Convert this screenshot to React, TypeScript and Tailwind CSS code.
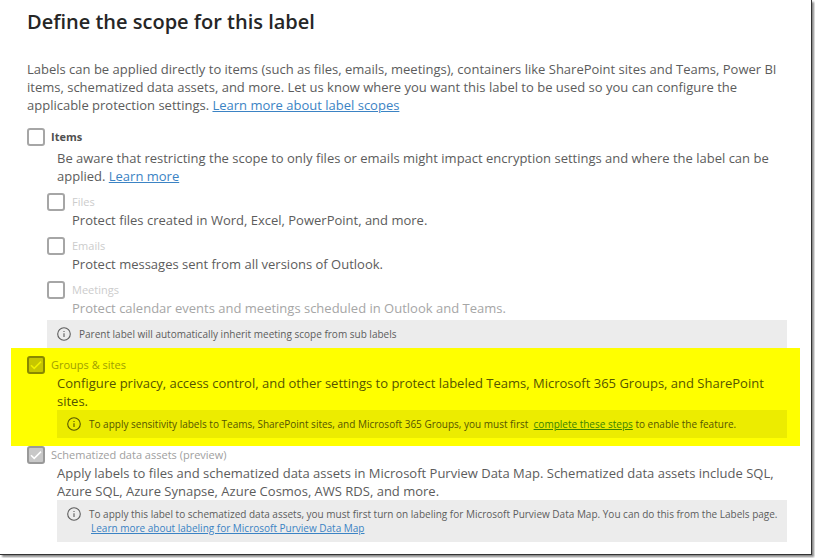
import React, { useState } from 'react';

type ScopeProps = {
    id: string;
    label: string;
    labelClass: string;
    gapClass?: string;
    disabled?: boolean;
    initial?: boolean;
    boxClass?: string;
    checkClass?: string;
};

function ScopeCheckbox({
    id,
    label,
    labelClass,
    gapClass = 'gap-[6px]',
    disabled,
    initial = false,
    boxClass = 'border-[#a6a6a6] bg-white',
    checkClass = 'text-white',
}: ScopeProps) {
    const [checked, setChecked] = useState(initial);

    return (
        <div className={`flex h-[18px] items-center ${gapClass}`}>
            <span className="relative h-[18px] w-[18px] shrink-0">
                <input
                    id={id}
                    type="checkbox"
                    checked={checked}
                    disabled={disabled}
                    onChange={(e) => setChecked(e.target.checked)}
                    className={`block h-[18px] w-[18px] appearance-none rounded-[3px] border-2 ${boxClass}`}
                />
                {checked && (
                    <svg
                        viewBox="0 0 18 18"
                        fill="none"
                        stroke="currentColor"
                        strokeWidth="1.5"
                        className={`pointer-events-none absolute inset-0 ${checkClass}`}
                    >
                        <path d="M4 9.3 L7.2 12.4 L14 5.6" />
                    </svg>
                )}
            </span>
            <label htmlFor={id} className={`text-[11px] leading-[18px] ${labelClass}`}>
                {label}
            </label>
        </div>
    );
}

function InfoIcon() {
    return (
        <svg
            viewBox="0 0 14 14"
            fill="none"
            stroke="currentColor"
            className="h-[14px] w-[14px] shrink-0"
        >
            <circle cx="7" cy="7" r="6.3" strokeWidth="1.1" />
            <path d="M7 6.2 V10" strokeWidth="1.1" />
            <path d="M7 4 V5" strokeWidth="1.1" />
        </svg>
    );
}

function InfoNote({ className, children }: { className: string; children: React.ReactNode }) {
    return (
        <div className={`flex items-start gap-2 pl-[10px] pr-2 text-[10px] leading-[14px] ${className}`}>
            <InfoIcon />
            <div>{children}</div>
        </div>
    );
}

export default function App() {
    return (
        <div className="bg-white pr-[3px] pb-[3px] font-['Open_Sans','Noto_Sans',sans-serif] text-[13px] leading-[18px] text-[#5c5c5c]">
            <main className="border-r border-b border-[#333] bg-white pt-2 pr-[11px] pb-3 pl-[11px] shadow-[2px_2px_2px_#888]">
                <div className="px-4 pr-[13px]">
                    <h1 className="text-[20px] leading-7 font-semibold text-[#262626]">Define the scope for this label</h1>
                    <p className="mt-6">
                        Labels can be applied directly to items (such as files, emails, meetings), containers like SharePoint
                        sites and Teams, Power BI items, schematized data assets, and more. Let us know where you want this
                        label to be used so you can configure the applicable protection settings.{' '}
                        <a href="#scopes" className="text-[#3b83c4] underline">Learn more about label scopes</a>
                    </p>

                    <section className="mt-[14px]">
                        <ScopeCheckbox id="items" label="Items" labelClass="font-bold text-[#505050]" />
                        <p className="mt-[3px] pl-[30px]">
                            Be aware that restricting the scope to only files or emails might impact encryption settings and
                            where the label can be applied.{' '}
                            <a href="#items-more" className="text-[#3b83c4] underline">Learn more</a>
                        </p>

                        <div className="mt-2 flex flex-col gap-2 pl-5">
                            <div>
                                <ScopeCheckbox id="files" label="Files" gapClass="gap-[7px]" labelClass="text-[#cccccc]" />
                                <p className="pl-[25px]">Protect files created in Word, Excel, PowerPoint, and more.</p>
                            </div>
                            <div>
                                <ScopeCheckbox id="emails" label="Emails" gapClass="gap-[7px]" labelClass="text-[#cccccc]" />
                                <p className="pl-[25px]">Protect messages sent from all versions of Outlook.</p>
                            </div>
                            <div>
                                <ScopeCheckbox id="meetings" label="Meetings" gapClass="gap-[7px]" labelClass="text-[#cccccc]" />
                                <p className="pl-[25px] text-[#a6a6a6]">
                                    Protect calendar events and meetings scheduled in Outlook and Teams.
                                </p>
                                <InfoNote className="mt-[3px] bg-[#ececec] py-[7px]">
                                    Parent label will automatically inherit meeting scope from sub labels
                                </InfoNote>
                            </div>
                        </div>
                    </section>
                </div>

                <section className="bg-[#ffff00] py-2 pr-[13px] pl-4 text-[#555500]">
                    <ScopeCheckbox
                        id="groups"
                        label="Groups & sites"
                        disabled
                        initial
                        labelClass="text-[#a0a000]"
                        boxClass="border-[#888800] bg-[#c6c600]"
                        checkClass="text-[#f0f000]"
                    />
                    <div className="pl-[30px]">
                        <p>
                            Configure privacy, access control, and other settings to protect labeled Teams, Microsoft 365
                            Groups, and SharePoint sites.
                        </p>
                        <InfoNote className="bg-[#ecec00] py-[7px]">
                            To apply sensitivity labels to Teams, SharePoint sites, and Microsoft 365 Groups, you must
                            first&nbsp; <a href="#steps" className="text-[#3b8300] underline">complete these steps</a> to
                            enable the feature.
                        </InfoNote>
                    </div>
                </section>

                <section className="pr-[13px] pl-4">
                    <ScopeCheckbox
                        id="schematized"
                        label="Schematized data assets (preview)"
                        disabled
                        initial
                        labelClass="text-[#a0a0a0]"
                        boxClass="border-[#999] bg-[#c8c8c8]"
                    />
                    <div className="pl-[30px]">
                        <p>
                            Apply labels to files and schematized data assets in Microsoft Purview Data Map. Schematized data
                            assets include SQL, Azure SQL, Azure Synapse, Azure Cosmos, AWS RDS, and more.
                        </p>
                        <InfoNote className="bg-[#ececec] py-[7px]">
                            To apply this label to schematized data assets, you must first turn on labeling for Microsoft
                            Purview Data Map. You can do this from the Labels page.
                            <a href="#purview" className="block pl-[2px] text-[#3b83c4] underline">
                                Learn more about labeling for Microsoft Purview Data Map
                            </a>
                        </InfoNote>
                    </div>
                </section>
            </main>
        </div>
    );
}
